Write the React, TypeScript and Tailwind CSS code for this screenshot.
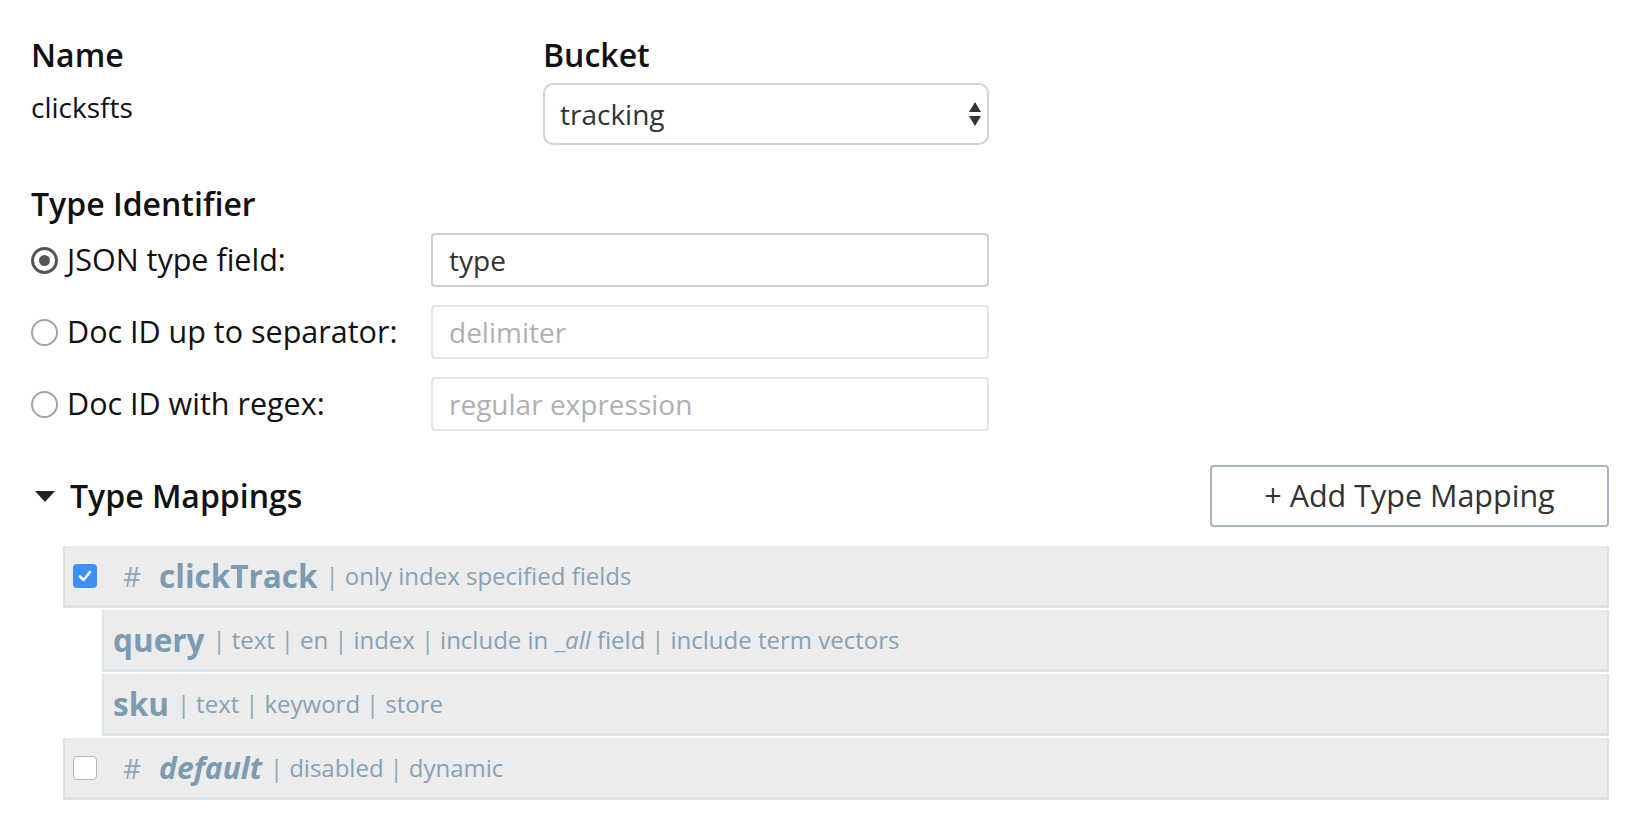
import React from 'react'

const FONT = "font-['Open_Sans',_'Noto_Sans',_sans-serif]"

function Radio({ checked }: { checked?: boolean }) {
  return checked ? (
    <span className="flex h-[27px] w-[27px] items-center justify-center rounded-full border-[3px] border-[#555]">
      <span className="h-[11px] w-[11px] rounded-full bg-[#555]" />
    </span>
  ) : (
    <span className="h-[27px] w-[27px] rounded-full border-2 border-[#a3a3a3] bg-white" />
  )
}

function Checkbox({ checked }: { checked?: boolean }) {
  return checked ? (
    <span className="flex h-[24px] w-[24px] items-center justify-center rounded-[4px] bg-[#3b8ff7]">
      <svg width="18" height="18" viewBox="0 0 18 18" fill="none">
        <path d="M4 9.5 L7.5 13 L14 5" stroke="white" strokeWidth="2.6" strokeLinecap="round" strokeLinejoin="round" />
      </svg>
    </span>
  ) : (
    <span className="h-[24px] w-[24px] rounded-[4px] border-[1.5px] border-[#b5b5b5] bg-white" />
  )
}

function IdRow({ label, checked, value, placeholder }: { label: string; checked?: boolean; value?: string; placeholder?: string }) {
  return (
    <div className="flex h-[54px] items-center">
      <div className="flex w-[400px] items-center">
        <Radio checked={checked} />
        <span className="ml-[9px] text-[30.5px] text-[#111]">{label}</span>
      </div>
      <div
        className={`flex h-[54px] w-[558px] items-center rounded-[4px] border-2 px-[16px] text-[28px] ${
          value ? 'border-[#cfcfcf] text-[#333]' : 'border-[#e6e6e6] text-[#b0b0b0]'
        }`}
      >
        {value ?? placeholder}
      </div>
    </div>
  )
}

function Sep({ first }: { first?: boolean }) {
  return <span className={`${first ? 'ml-[8px]' : 'ml-[6px]'} mr-[6px] text-[#8ea7b8]`}>|</span>
}

function MappingRow({ children, nested }: { children: React.ReactNode; nested?: boolean }) {
  return (
    <div
      className={`flex h-[62px] items-center border-x-2 border-b-[3px] border-[#d9e2ea] bg-[#ececec] ${
        nested ? 'ml-[71px] pl-[9px]' : 'ml-[32px] pl-[8px]'
      }`}
    >
      {children}
    </div>
  )
}

export default function App() {
  return (
    <div className={`${FONT} min-h-screen bg-white pl-[31px] pr-[43px] pt-[35px] text-[#111]`}>
      <div className="flex">
        <div className="w-[512px]">
          <div className="h-[40px] text-[32px] font-semibold leading-[40px]">Name</div>
          <div className="mt-[12px] text-[28px] leading-[40px]">clicksfts</div>
        </div>
        <div>
          <div className="h-[40px] text-[32px] font-semibold leading-[40px]">Bucket</div>
          <div className="mt-[8px] flex h-[62px] w-[446px] items-center justify-between rounded-[10px] border-2 border-[#d2d2d2] pl-[15px] pr-[5px] text-[28px] text-[#333]">
            <span>tracking</span>
            <svg width="14" height="26" viewBox="0 0 14 26">
              <path d="M7 1 L13 11 L1 11 Z" fill="#333" />
              <path d="M1 15 L13 15 L7 25 Z" fill="#333" />
            </svg>
          </div>
        </div>
      </div>

      <div className="mt-[39px] h-[40px] text-[32px] font-semibold leading-[40px]">Type Identifier</div>
      <div className="mt-[9px] flex flex-col gap-[18px]">
        <IdRow label="JSON type field:" checked value="type" />
        <IdRow label="Doc ID up to separator:" placeholder="delimiter" />
        <IdRow label="Doc ID with regex:" placeholder="regular expression" />
      </div>

      <div className="mt-[34px] flex h-[62px] items-center justify-between">
        <div className="flex items-center">
          <svg width="22" height="14" viewBox="0 0 22 14" className="ml-[3px]">
            <path d="M1 2 L21 2 L11 13 Z" fill="#222" />
          </svg>
          <span className="ml-[14px] text-[32px] font-semibold">Type Mappings</span>
        </div>
        <button className="h-[62px] w-[399px] rounded-[4px] border-2 border-[#a9b3bf] bg-white text-[30.5px] text-[#333]">
          + Add Type Mapping
        </button>
      </div>

      <div className="mt-[19px] flex flex-col gap-[2px] text-[#7b9bb1]">
        <MappingRow>
          <Checkbox checked />
          <span className="ml-[26px] text-[28px] text-[#8ea7b8]">#</span>
          <span className="ml-[18px] text-[31.5px] font-bold">clickTrack</span>
          <span className="text-[24px] text-[#86a2b5]">
            <Sep first />only index specified fields
          </span>
        </MappingRow>
        <MappingRow nested>
          <span className="text-[31.5px] font-bold">query</span>
          <span className="text-[24px] text-[#86a2b5]">
            <Sep first />text<Sep />en<Sep />index<Sep />include in _<i>all</i> field<Sep />include term vectors
          </span>
        </MappingRow>
        <MappingRow nested>
          <span className="text-[31.5px] font-bold">sku</span>
          <span className="text-[24px] text-[#86a2b5]">
            <Sep first />text<Sep />keyword<Sep />store
          </span>
        </MappingRow>
        <MappingRow>
          <Checkbox />
          <span className="ml-[26px] text-[28px] text-[#8ea7b8]">#</span>
          <span className="ml-[18px] text-[30px] font-bold italic">default</span>
          <span className="text-[24px] text-[#86a2b5]">
            <Sep first />disabled<Sep />dynamic
          </span>
        </MappingRow>
      </div>
    </div>
  )
}
